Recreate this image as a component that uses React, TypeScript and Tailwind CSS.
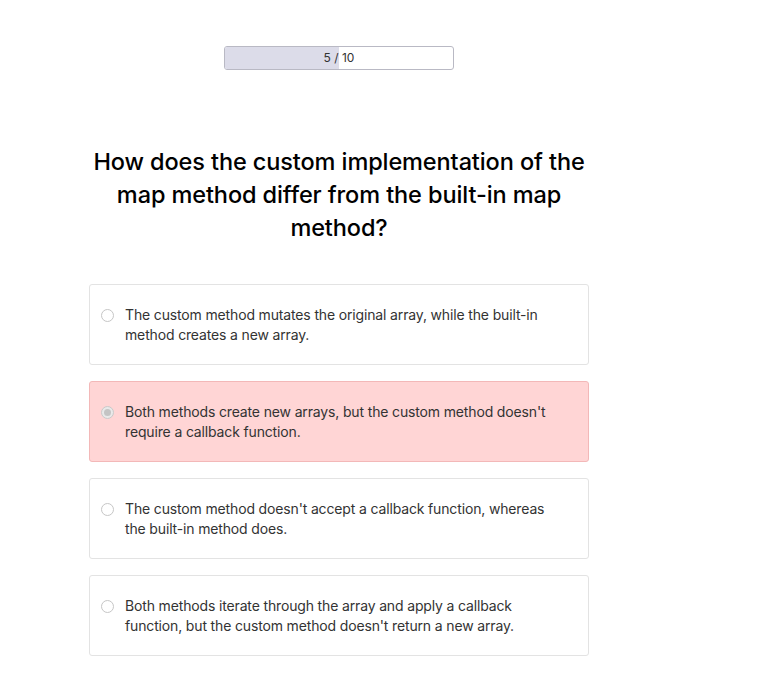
import React from "react";

const options = [
  "The custom method mutates the original array, while the built-in method creates a new array.",
  "Both methods create new arrays, but the custom method doesn't require a callback function.",
  "The custom method doesn't accept a callback function, whereas the built-in method does.",
  "Both methods iterate through the array and apply a callback function, but the custom method doesn't return a new array.",
];

export default function App() {
  const selected = 1;
  const current = 5;
  const total = 10;

  return (
    <div className="min-h-screen bg-white font-['Inter',sans-serif] text-[#222]">
      <div className="ml-[89px] w-[500px] pt-[46px]">
        {/* progress */}
        <div className="mx-auto relative h-6 w-[230px] rounded-[3px] border border-[#b9b9c4] overflow-hidden">
          <div className="h-full bg-[#dcdce9]" style={{ width: `${(current / total) * 100}%` }} />
          <div className="absolute inset-0 flex items-center justify-center text-[12px] text-[#333]">
            {current} / {total}
          </div>
        </div>

        {/* question */}
        <h1 className="mt-[75px] text-center text-[23.5px] leading-[33px] font-medium text-black tracking-[-0.1px]">
          How does the custom implementation of the map method differ from the built-in map method?
        </h1>

        {/* options */}
        <div className="mt-[40px] flex flex-col gap-4">
          {options.map((opt, i) => {
            const isSel = i === selected;
            return (
              <label
                key={i}
                className={`flex items-start gap-[11px] rounded-[3px] border pl-[11px] pr-[22px] pt-[20px] pb-[19px] min-h-[81px] ${
                  isSel ? "bg-[#ffd5d5] border-[#f3b8b8]" : "bg-white border-[#e3e3e3]"
                }`}
              >
                <span
                  className={`mt-[4px] flex h-[13px] w-[13px] shrink-0 items-center justify-center rounded-full border ${
                    isSel ? "border-[#c9c9c9] bg-[#e9e9e9]" : "border-[#c6c6c6] bg-white"
                  }`}
                >
                  {isSel && <span className="h-[7px] w-[7px] rounded-full bg-[#c4c4c4]" />}
                </span>
                <span className="text-[14px] leading-[20px] text-[#333] tracking-[-0.15px]">{opt}</span>
              </label>
            );
          })}
        </div>
      </div>
    </div>
  );
}
